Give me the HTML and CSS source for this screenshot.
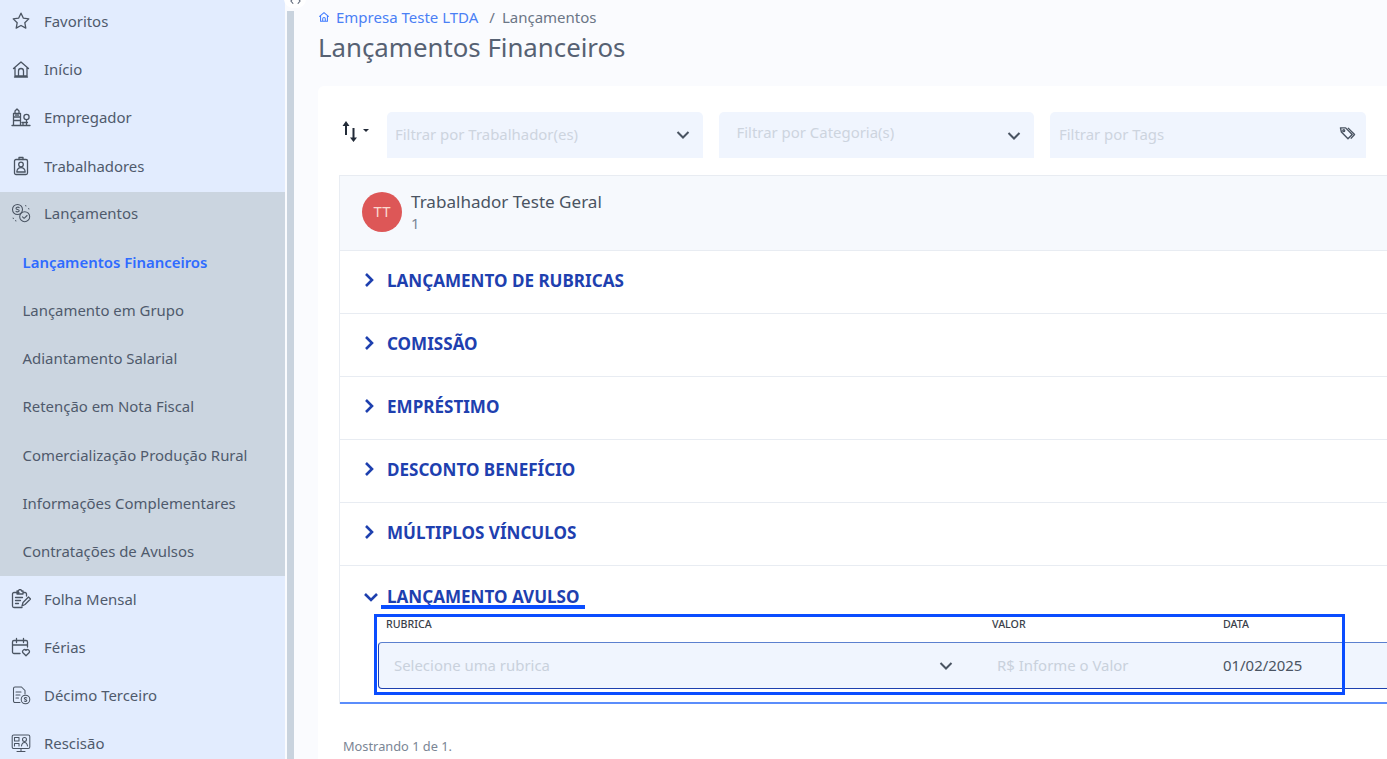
FILE: index.html
```html
<!DOCTYPE html>
<html lang="pt-BR">
<head>
<meta charset="utf-8">
<title>Lançamentos Financeiros</title>
<link rel="stylesheet" href="styles.css">
</head>
<body>
<div class="app">
  <nav class="sidebar">
    <a class="nav-row"><svg class="nav-icon" viewBox="0 0 20 20"><path d="M10 2.200l2.400 5 5.400.7-4 3.800 1 5.400-4.800-2.600-4.800 2.600 1-5.400-4-3.800 5.400-.7z"/></svg><span>Favoritos</span></a>
    <a class="nav-row"><svg class="nav-icon" viewBox="0 0 20 20"><path d="M2.500 9.500L10 3l7.500 6.500M4 8.500V17h12V8.500M7.500 17v-5a2.500 2.500 0 0 1 5 0v5M3.500 18h13"/></svg><span>Início</span></a>
    <a class="nav-row"><svg class="nav-icon" viewBox="0 0 20 20"><path d="M1 18.500h18M2.500 18.500V6.500h7v12M4 6.500V4l2-2 2 2v2.500M2.500 10h7M2.500 13.500h7M4.500 8.200h3M11 15.500h5.500M12 15.500v3M15.500 15.500v3"/><circle cx="15.500" cy="10" r="2.600"/><path d="M15.500 12.600v3"/></svg><span>Empregador</span></a>
    <a class="nav-row"><svg class="nav-icon" viewBox="0 0 20 20"><rect x="3.500" y="3.500" width="13" height="15" rx="1.500"/><path d="M8 3.500V1.500h4v2"/><circle cx="10" cy="8.500" r="2.300"/><path d="M5.800 16c.3-3 2-4.300 4.200-4.300s3.900 1.300 4.200 4.300z"/></svg><span>Trabalhadores</span></a>
    <div class="nav-group">
      <a class="nav-row"><svg class="nav-icon nav-icon-thin" viewBox="0 0 20 20"><circle cx="6.500" cy="6.500" r="5"/><path d="M8.200 4.600c-.8-.8-3.200-.6-3.200.8s3.200.8 3.200 2.200-2.400 1.600-3.200.8"/><circle cx="13.700" cy="13.700" r="5"/><path d="M11.500 13.800l1.600 1.500 3-2.800M14.500 2.500l.5.5M17.500 5.500l.5.500M2 15l.5.500M4.500 17.500l.5.500"/></svg><span>Lançamentos</span></a>
      <a class="sub-row sub-active">Lançamentos Financeiros</a>
      <a class="sub-row">Lançamento em Grupo</a>
      <a class="sub-row">Adiantamento Salarial</a>
      <a class="sub-row">Retenção em Nota Fiscal</a>
      <a class="sub-row">Comercialização Produção Rural</a>
      <a class="sub-row">Informações Complementares</a>
      <a class="sub-row">Contratações de Avulsos</a>
    </div>
    <a class="nav-row"><svg class="nav-icon" viewBox="0 0 20 20"><path d="M8 3.500H3a1.500 1.500 0 0 0-1.500 1.500v12A1.500 1.500 0 0 0 3 18.500h8M12 3.500h2A1.500 1.500 0 0 1 15.500 5v2M6 3.500V2h1.500a1.500 1.500 0 0 1 3 0H12v3H6zM4.500 8.500h7M4.500 11.500h5M4.500 14.500h3M11 17l1-3.500 5.500-5.500 2 2-5.500 5.500z"/></svg><span>Folha Mensal</span></a>
    <a class="nav-row"><svg class="nav-icon" viewBox="0 0 20 20"><path d="M9 16.500H3A1.500 1.500 0 0 1 1.500 15V5A1.500 1.500 0 0 1 3 3.500h12A1.500 1.500 0 0 1 16.500 5v5M1.500 8h15M5.500 1.500v4M12.500 1.500v4M15 18.800l-3.300-3.300a2 2 0 0 1 3.300-2.200 2 2 0 0 1 3.300 2.200z"/></svg><span>Férias</span></a>
    <a class="nav-row"><svg class="nav-icon nav-icon-thin" viewBox="0 0 20 20"><path d="M9 17.500H4A1.500 1.500 0 0 1 2.500 16V3.500A1.500 1.500 0 0 1 4 2h6.500l3.500 3.500V9M5 7h5M5 10h4M5 13h2.500"/><circle cx="14.500" cy="14.500" r="4.300"/><path d="M15.800 13c-.5-.6-2.500-.6-2.500.5s2.500.8 2.500 2-2 1-2.500.5"/></svg><span>Décimo Terceiro</span></a>
    <a class="nav-row"><svg class="nav-icon nav-icon-thin" viewBox="0 0 20 20"><rect x="1.200" y="2" width="17.600" height="13.500" rx="1.500"/><path d="M6 18.500h8M10 15.500v3M3.500 4.500h4.500v3.500H3.500z"/><circle cx="13.500" cy="6.500" r="2"/><path d="M10.500 13c.3-2 1.500-3.500 3-3.500s2.700 1.500 3 3.500M3.500 13v-2.500h4.500V13"/></svg><span>Rescisão</span></a>
  </nav>
  <div class="scrollbar"><div class="thumb"></div></div>
  <button class="collapse-handle" aria-label="Recolher"><svg viewBox="0 0 12 8"><path d="M3.500 1L1 4l2.500 3M8.500 1L11 4 8.500 7"/></svg></button>
  <main class="main">
    <div class="breadcrumb">
      <svg class="crumb-home" viewBox="0 0 14 14"><path d="M1.500 6.500L7 2l5.500 4.500M3 5.500V12h8V5.500M5.500 12V9a1.500 1.500 0 0 1 3 0v3"/></svg>
      <span class="crumb-link">Empresa Teste LTDA</span>
      <span class="crumb-sep">/</span>
      <span class="crumb-current">Lançamentos</span>
    </div>
    <h1 class="title">Lançamentos Financeiros</h1>
    <section class="card">
      <div class="filters">
        <button class="sort" aria-label="Ordenar">
          <svg class="sort-icon" viewBox="0 0 16 22"><path class="sort-stem" d="M4 4v11M11.500 8v11"/><path class="sort-head" d="M.5 6L4 1l3.500 5zM8 17.500h7L11.500 22z"/></svg>
          <span class="caret"></span>
        </button>
        <div class="filter"><span class="placeholder">Filtrar por Trabalhador(es)</span><svg class="chev" viewBox="0 0 14 8"><path d="M1.500 1L7 6.500 12.500 1"/></svg></div>
        <div class="filter filter-up"><span class="placeholder">Filtrar por Categoria(s)</span><svg class="chev" viewBox="0 0 14 8"><path d="M1.500 1L7 6.500 12.500 1"/></svg></div>
        <div class="filter filter-tags"><span class="placeholder">Filtrar por Tags</span><svg class="tag" viewBox="0 0 18 16"><path d="M1.500 2h5.500l7 7-4.500 4.500-7-7-1-4.500z"/><circle cx="5" cy="5" r="1"/><path d="M9.500 2l7 7-4 4.500"/></svg></div>
      </div>
      <div class="panel">
        <header class="worker">
          <div class="avatar">TT</div>
          <div class="worker-text">
            <div class="worker-name">Trabalhador Teste Geral</div>
            <div class="worker-id">1</div>
          </div>
        </header>
        <div class="acc-row"><svg class="acc-chev" viewBox="0 0 10 16"><path d="M2 2l6 6-6 6"/></svg><span>LANÇAMENTO DE RUBRICAS</span></div>
        <div class="acc-row"><svg class="acc-chev" viewBox="0 0 10 16"><path d="M2 2l6 6-6 6"/></svg><span>COMISSÃO</span></div>
        <div class="acc-row"><svg class="acc-chev" viewBox="0 0 10 16"><path d="M2 2l6 6-6 6"/></svg><span>EMPRÉSTIMO</span></div>
        <div class="acc-row"><svg class="acc-chev" viewBox="0 0 10 16"><path d="M2 2l6 6-6 6"/></svg><span>DESCONTO BENEFÍCIO</span></div>
        <div class="acc-row"><svg class="acc-chev" viewBox="0 0 10 16"><path d="M2 2l6 6-6 6"/></svg><span>MÚLTIPLOS VÍNCULOS</span></div>
        <div class="acc-open">
          <div class="acc-head"><svg class="acc-chev-open" viewBox="0 0 16 10"><path d="M2 2l6 6 6-6"/></svg><span class="acc-title">LANÇAMENTO AVULSO</span></div>
          <div class="field-labels"><span class="lab-rubrica">RUBRICA</span><span class="lab-valor">VALOR</span><span class="lab-data">DATA</span></div>
          <div class="field-row">
            <span class="rubrica-ph">Selecione uma rubrica</span>
            <svg class="chev" viewBox="0 0 14 8"><path d="M1.500 1L7 6.500 12.500 1"/></svg>
            <span class="valor-ph">R$ Informe o Valor</span>
            <span class="data-val">01/02/2025</span>
          </div>
          <div class="mark-underline"></div>
          <div class="mark-box"></div>
        </div>
      </div>
      <p class="count">Mostrando 1 de 1.</p>
    </section>
  </main>
</div>
</body>
</html>
```
FILE: styles.css
```css
* { box-sizing: border-box; }
html, body { margin: 0; height: 759px; overflow: hidden; }
body { font-family: "Noto Sans", sans-serif; font-size: 14.930px; color: #566173; background: #fafbfe; }
.app { display: flex; width: 1387px; height: 759px; overflow: hidden; position: relative; }

.sidebar { width: 285px; height: 762px; flex: none; background: #e2ecfe; margin-top: -3px; display: flex; flex-direction: column; }
.nav-row { height: 48.200px; flex: none; display: flex; align-items: center; padding-left: 11px; gap: 13px; color: #4f5a6c; }
.nav-icon { width: 20px; height: 20px; flex: none; fill: none; stroke: #4a5462; stroke-width: 1.300; stroke-linejoin: round; stroke-linecap: round; }
.nav-icon-thin { stroke-width: 1.050; }
.nav-group { background: #cbd5e0; height: 384px; margin-top: 2px; flex: none; margin-bottom: -1px; }
.nav-group .nav-row { height: 43px; margin-bottom: 3px; }
.sub-row { display: flex; align-items: center; height: 48.200px; padding-left: 22.500px; color: #4f5a6c; }
.sub-active { color: #2f6bff; font-weight: 600; }

.scrollbar { width: 9px; flex: none; background: #fafbfe; padding-left: 2px; padding-top: 11px; }
.thumb { width: 7px; height: 100%; background: #c9d3de; }
.collapse-handle { position: absolute; left: 284px; top: -10px; width: 22px; height: 18px; padding: 0; border: none; border-radius: 9px; background: #fff; display: flex; align-items: flex-end; justify-content: center; }
.collapse-handle svg { width: 11px; height: 8px; margin-bottom: 3px; fill: none; stroke: #5a6475; stroke-width: 1.200; }

.main { flex: 1; min-width: 0; padding: 7px 0 0 24px; background: #fafbfe; }
.breadcrumb { display: flex; align-items: center; height: 20px; font-size: 15px; }
.crumb-home { width: 12px; height: 12px; margin-right: 6px; fill: none; stroke: #3f7bff; stroke-width: 1.200; }
.crumb-link { color: #4a80f5; }
.crumb-sep { margin: 0 7px 0 11px; color: #6b7686; }
.crumb-current { color: #6b7686; }
.title { margin: 3px 0 0; font-size: 25.800px; line-height: 34px; font-weight: 400; color: #566173; }
.card { margin-top: 22px; width: 1100px; height: 700px; background: #fff; border-radius: 6px; padding: 26px 0 0 21px; }

.filters { display: flex; align-items: flex-start; gap: 16px; }
.sort { width: 32px; height: 46px; flex: none; padding: 8px 0 0 3px; border: none; background: none; display: flex; align-items: flex-start; }
.sort-icon { width: 16px; height: 22px; flex: none; }
.sort-stem { fill: none; stroke: #222b38; stroke-width: 2; }
.sort-head { fill: #222b38; }
.caret { width: 0; height: 0; margin: 9px 0 0 5px; border-left: 3px solid transparent; border-right: 3px solid transparent; border-top: 3px solid #222b38; }
.filter { width: 315.500px; height: 46px; flex: none; padding: 0 13px 2px 8px; background: #f0f5fe; border-radius: 5px 5px 0 0; display: flex; align-items: center; justify-content: space-between; }
.filter-up { padding-left: 18px; padding-bottom: 7px; }
.filter-tags { padding-left: 9px; }
.filter .chev { margin-top: 2px; }
.filter-up .chev { margin-top: 9px; }
.placeholder { color: #cdd4de; }
.chev { width: 14px; height: 8px; flex: none; fill: none; stroke: #4a5462; stroke-width: 2; }
.tag { width: 17px; height: 15px; margin-top: -2px; margin-right: -3px; fill: none; stroke: #4a5462; stroke-width: 1.500; stroke-linejoin: round; }

.panel { margin-top: 17px; width: 1060px; border-left: 1px solid #e9edf3; }
.worker { height: 76px; display: flex; align-items: center; padding: 0 0 2px 22px; gap: 9px; background: #f6f9fd; border-top: 1px solid #e8ecf2; border-bottom: 1px solid #e8ecf2; }
.avatar { width: 40px; height: 40px; border-radius: 50%; background: #dd5757; color: #fbd9d0; display: flex; align-items: center; justify-content: center; padding-bottom: 2px; }
.worker-name { font-size: 17.070px; line-height: 22px; color: #4a5462; }
.worker-id { line-height: 20px; color: #7b8695; }
.acc-row { height: 63px; display: flex; align-items: center; padding: 0 0 4px 24px; gap: 13px; border-bottom: 1px solid #e8ecf2; color: #1e40af; font-size: 17.070px; font-weight: 700; }
.acc-chev { width: 10px; height: 16px; flex: none; fill: none; stroke: #1e40af; stroke-width: 2.600; }
.acc-open { position: relative; height: 138px; border-bottom: 2px solid #5b8dfb; }
.acc-head { height: 61px; display: flex; align-items: center; padding-left: 23px; gap: 8px; color: #1e40af; font-size: 17.070px; font-weight: 700; }
.acc-chev-open { width: 16px; height: 10px; flex: none; fill: none; stroke: #1e40af; stroke-width: 2.600; }
.field-labels { position: absolute; left: 0; top: 52px; width: 100%; height: 12px; font-size: 10.670px; font-weight: 500; line-height: 12px; color: #3a3f4a; }
.field-labels span { position: absolute; top: 0; }
.lab-rubrica { left: 46px; }
.lab-valor { left: 652px; }
.lab-data { left: 883px; }
.field-row { position: absolute; left: 38px; top: 76px; width: 1030px; height: 47px; background: #f0f5fe; border: 1px solid #1e40af; border-top-color: #5b80cf; border-radius: 4px; color: #c9d1dc; }
.field-row > * { position: absolute; top: calc(50% - 1px); transform: translateY(-50%); }
.field-row > .chev { top: 50%; }
.rubrica-ph { left: 15px; }
.field-row .chev { left: 560px; }
.valor-ph { left: 618px; }
.data-val { left: 844px; color: #4a5462; }
.mark-underline { position: absolute; left: 41px; top: 39px; width: 204px; height: 4px; background: #0a4dff; }
.mark-box { position: absolute; left: 34px; top: 48px; width: 971px; height: 81px; border: 3px solid #0a4dff; }
.count { margin: 34px 0 0 4px; font-size: 12.800px; line-height: 16px; color: #7b8695; }
```
